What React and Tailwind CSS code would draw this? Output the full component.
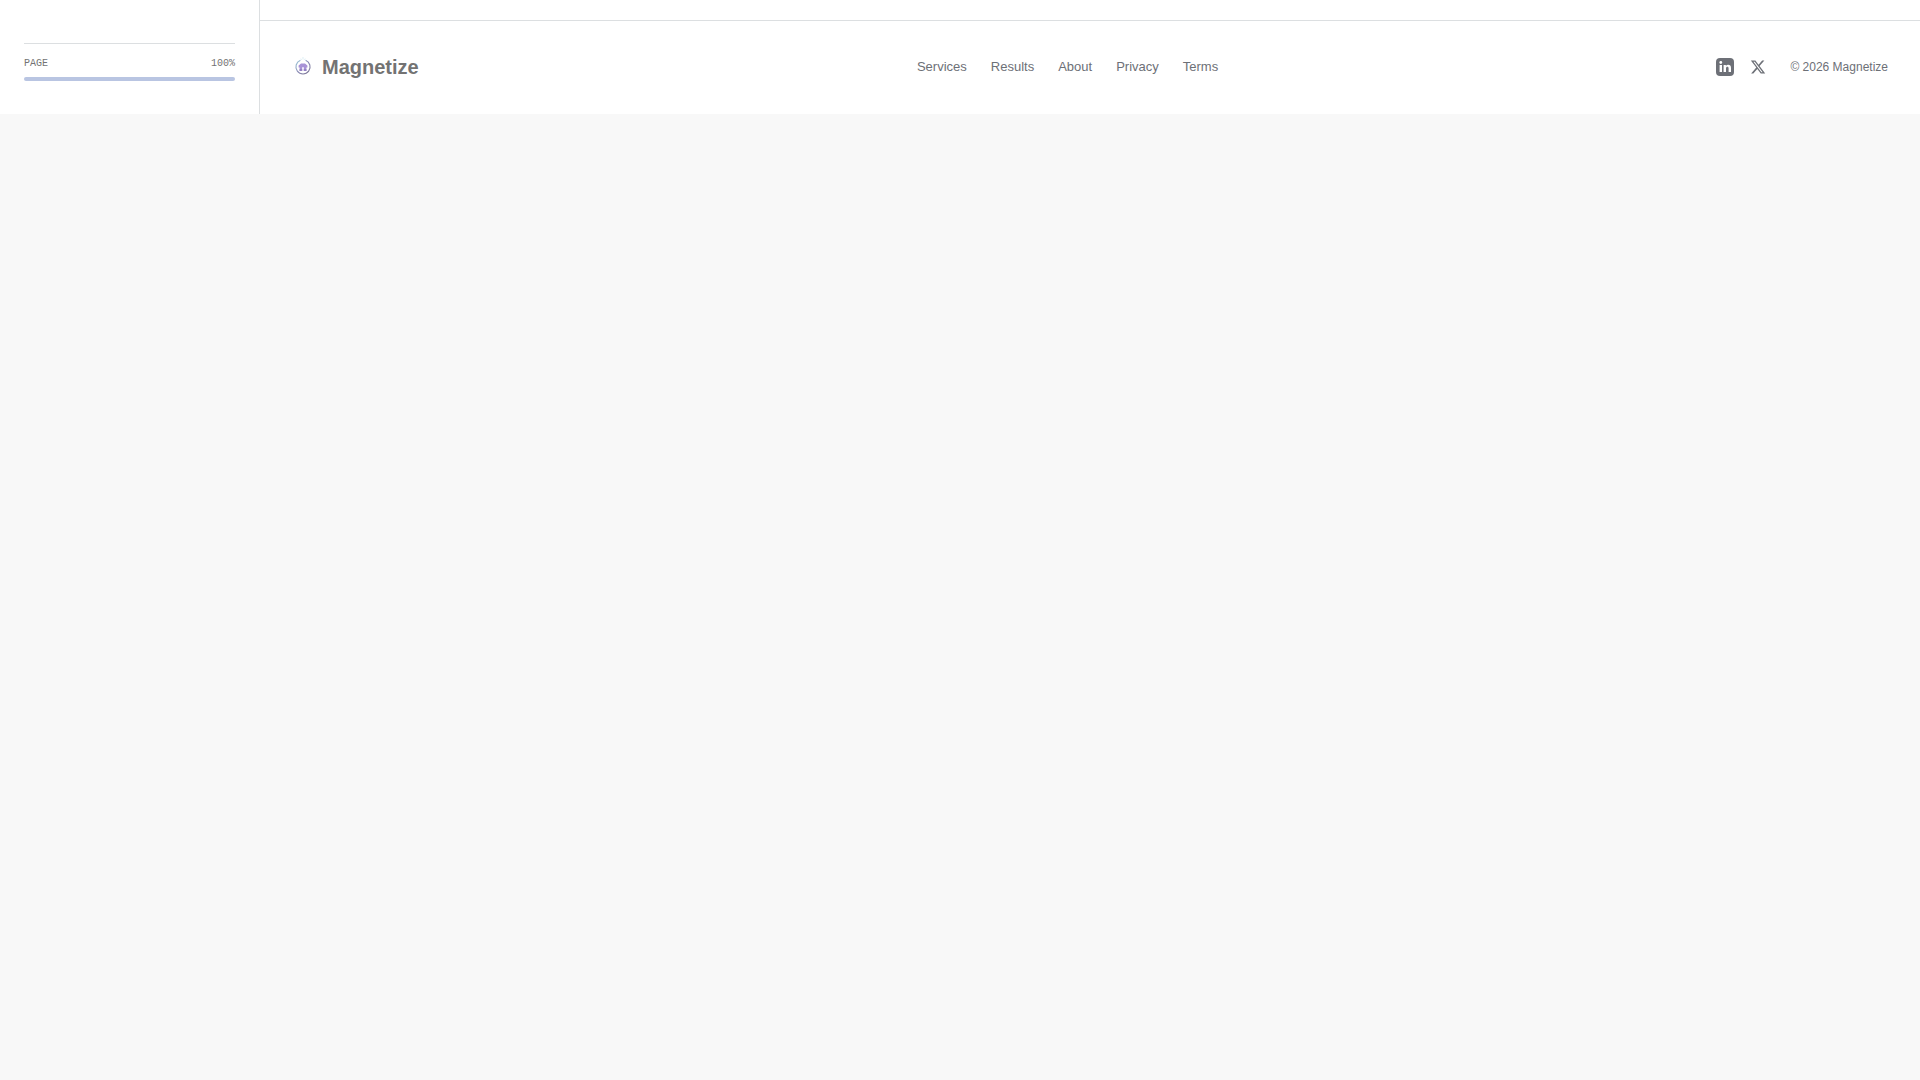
const links = ['Services', 'Results', 'About', 'Privacy', 'Terms'];

function LogoMark() {
  return (
    <svg viewBox="0 0 22 22" className="size-[22px]" fill="none" aria-hidden="true">
      <defs>
        <linearGradient id="ring" x1="0" y1="0" x2="1" y2="1">
          <stop offset="0" stopColor="#9ccbdc" />
          <stop offset="0.5" stopColor="#8a8ab4" />
          <stop offset="1" stopColor="#77708f" />
        </linearGradient>
      </defs>
      <path d="M8.4 4.3A7.1 7.1 0 1 0 13.6 4.3" stroke="url(#ring)" strokeWidth="1.1" />
      <path d="M11 1v2.4M8.8 2.6l.7 1.4M13.2 2.6l-.7 1.4" stroke="#cfe6ef" strokeWidth="0.7" />
      <path
        d="M7.6 15V11.6H6.6V9.6L9 7.6H13L15.4 9.6V11.6H14.4V15H11.8V11.2H10.2V15Z"
        fill="#a892d6"
      />
      <path d="M7.6 13h2.6v2H7.6zM11.8 13h2.6v2h-2.6z" fill="#9480c4" />
    </svg>
  );
}

function LinkedInIcon() {
  return (
    <svg viewBox="0 0 18 18" className="size-[18px]" aria-hidden="true">
      <rect width="18" height="18" rx="4" fill="currentColor" />
      <g fill="#fff">
        <circle cx="4.8" cy="4.5" r="1.4" />
        <path d="M3.6 7h2.4v7H3.6zM7.6 7h2.3v1c.5-.8 1.3-1.2 2.3-1.2 1.9 0 2.8 1.2 2.8 3.2v4h-2.4v-3.6c0-1-.4-1.6-1.2-1.6-.9 0-1.4.6-1.4 1.7V14H7.6z" />
      </g>
    </svg>
  );
}

function XIcon() {
  return (
    <svg viewBox="0 0 24 24" className="size-4" fill="currentColor" aria-hidden="true">
      <path d="M18.244 2.25h3.308l-7.227 8.26 8.502 11.24H16.17l-5.214-6.817L4.99 21.75H1.68l7.73-8.835L1.254 2.25H8.08l4.713 6.231zm-1.161 17.52h1.833L7.084 4.126H5.117z" />
    </svg>
  );
}

export default function App() {
  return (
    <div className="min-h-screen bg-[#f8f8f8] font-['Liberation_Sans',Arial,sans-serif] text-[#6d7077]">
      <div className="flex bg-white">
        <aside className="w-[260px] shrink-0 border-r border-[#dcdfe1] px-6 pt-[43px] pb-[33px]">
          <div className="border-t border-[#dcdfe1] pt-[13px]">
            <div className="mb-1.5 flex justify-between font-['Liberation_Mono',monospace] text-[10px] leading-[14px] text-[#737373]">
              <span id="page-progress">PAGE</span>
              <span>100%</span>
            </div>
            <div
              role="progressbar"
              aria-labelledby="page-progress"
              aria-valuenow={100}
              className="h-1 rounded-full bg-[#b9c5e2]"
            />
          </div>
        </aside>
        <main className="min-w-0 grow pt-5">
          <footer className="flex items-center justify-between border-t border-[#dcdfe1] px-8 py-8">
            <a href="#" className="flex items-center gap-2 text-xl leading-7 font-bold text-[#737373]">
              <LogoMark />
              Magnetize
            </a>
            <nav className="flex gap-6 text-[13px] leading-5">
              {links.map((label) => (
                <a key={label} href={`#${label.toLowerCase()}`}>
                  {label}
                </a>
              ))}
            </nav>
            <div className="flex items-center gap-6">
              <div className="flex items-center gap-4">
                <a href="#linkedin" aria-label="LinkedIn">
                  <LinkedInIcon />
                </a>
                <a href="#x" aria-label="X">
                  <XIcon />
                </a>
              </div>
              <p className="text-xs">© 2026 Magnetize</p>
            </div>
          </footer>
        </main>
      </div>
    </div>
  );
}
